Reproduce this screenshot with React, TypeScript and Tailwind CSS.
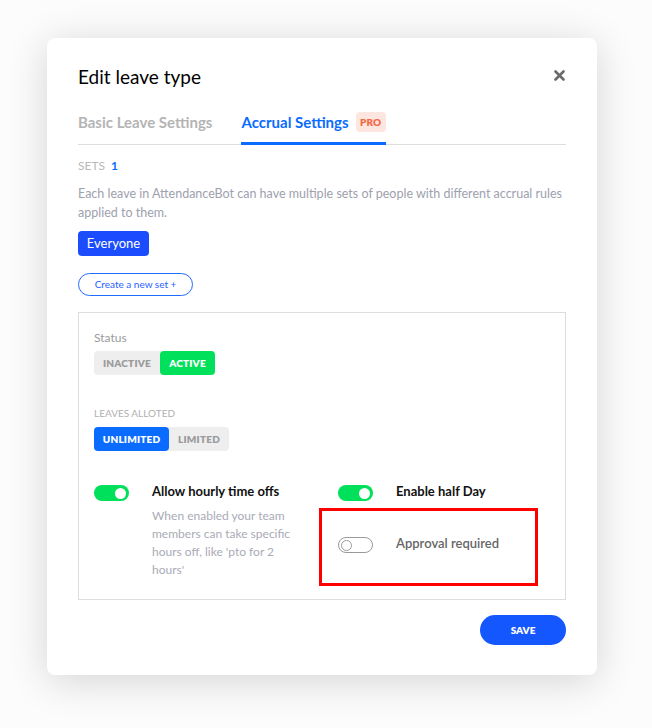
import type { ReactNode } from "react";

const FONT = { fontFamily: "Lato, 'Open Sans', sans-serif" };

function Toggle({ on }: { on: boolean }) {
  if (on) {
    return (
      <div className="flex h-4 w-[35px] shrink-0 items-center justify-end rounded-full bg-[#00e05a] pr-[3px]">
        <div className="h-[11px] w-[11px] rounded-full bg-white" />
      </div>
    );
  }
  return (
    <div className="flex h-4 w-[35px] shrink-0 items-center rounded-full border border-[#9a9a9a] bg-white pl-[2px]">
      <div className="h-[11px] w-[11px] rounded-full border border-[#9a9a9a] bg-white" />
    </div>
  );
}

function Segment({
  items,
}: {
  items: { label: string; active: boolean; color?: string; width: string }[];
}) {
  return (
    <div className="flex h-6 w-fit rounded bg-[#eeeeee]">
      {items.map((item) => (
        <div
          key={item.label}
          className={`flex h-6 items-center justify-center rounded text-[10px] font-extrabold tracking-[0.02em] ${item.width} ${
            item.active ? `${item.color} text-white` : "text-[#9b9b9b]"
          }`}
        >
          {item.label}
        </div>
      ))}
    </div>
  );
}

function OptionRow({
  on,
  title,
  titleClass,
  children,
}: {
  on: boolean;
  title: string;
  titleClass: string;
  children?: ReactNode;
}) {
  return (
    <div className="flex items-start gap-[23px]">
      <Toggle on={on} />
      <div className="-mt-[4px]">
        <div className={`text-[13px] leading-5 ${titleClass}`}>{title}</div>
        {children}
      </div>
    </div>
  );
}

export default function App() {
  return (
    <div
      className="min-h-[728px] bg-[#fcfcfc] pl-[47px] pt-[38px]"
      style={FONT}
    >
      <div className="w-[550px] rounded-lg bg-white px-[31px] pb-[30px] pt-[25px] shadow-[0_6px_40px_rgba(0,0,0,0.16)]">
        <div className="flex items-center justify-between">
          <h2 className="text-[19px] leading-7 text-black">Edit leave type</h2>
          <svg width="11" height="11" viewBox="0 0 11 11" className="mr-[1px] -mt-[4px]">
            <path d="M1.5 1.5 L9.5 9.5 M9.5 1.5 L1.5 9.5" stroke="#6b6b6b" strokeWidth="2.6" strokeLinecap="round" />
          </svg>
        </div>

        <div className="mt-[21px] flex gap-[29px] border-b border-[#dedede]">
          <div className="pb-[11px] text-[15px] font-bold leading-5 text-[#b4b4b4]">
            Basic Leave Settings
          </div>
          <div className="-mb-px flex items-center gap-[7px] border-b-[3px] border-[#0a6cff] pb-[10px]">
            <span className="text-[15px] font-bold leading-5 text-[#0a6cff]">
              Accrual Settings
            </span>
            <span className="flex h-5 w-[30px] items-center justify-center rounded bg-[#fde6df] text-[10px] font-extrabold text-[#f36a48]">
              PRO
            </span>
          </div>
        </div>

        <div className="mt-[13px] flex gap-[6px] text-[12px] leading-4">
          <span className="text-[#b8b8b8]">SETS</span>
          <span className="font-bold text-[#0a6cff]">1</span>
        </div>

        <p className="mt-[10px] text-[12.5px] leading-[19px] text-[#9da1ae]">
          Each leave in AttendanceBot can have multiple sets of people with different accrual rules applied to them.
        </p>

        <div className="mt-[9px] flex h-[25px] w-[71px] items-center justify-center rounded-sm bg-[#1b4dff] text-[13px] text-white">
          Everyone
        </div>

        <div className="mt-[17px] flex h-[23px] w-[115px] items-center justify-center rounded-full border border-[#1f6bff] text-[10px] text-[#1f5eff]">
          Create a new set +
        </div>

        <div className="mt-4 border border-[#dddddd] pb-[20px] pl-[15px] pr-[15px] pt-[17px]">
          <div className="text-[12px] leading-4 text-[#9b9b9b]">Status</div>
          <div className="mt-[5px]">
            <Segment
              items={[
                { label: "INACTIVE", active: false, width: "w-[66px]" },
                { label: "ACTIVE", active: true, color: "bg-[#00e05a]", width: "w-[55px]" },
              ]}
            />
          </div>

          <div className="mt-[31px] text-[10px] leading-[14px] text-[#b0b0b0]">
            LEAVES ALLOTED
          </div>
          <div className="mt-[7px]">
            <Segment
              items={[
                { label: "UNLIMITED", active: true, color: "bg-[#0a6cff]", width: "w-[75px]" },
                { label: "LIMITED", active: false, width: "w-[60px]" },
              ]}
            />
          </div>

          <div className="mt-[34px] flex">
            <div className="w-[244px]">
              <OptionRow on title="Allow hourly time offs" titleClass="font-bold text-[#111111]">
                <p className="mt-[6px] w-[150px] text-[12px] leading-[18px] text-[#a9abb6]">
                  When enabled your team members can take specific hours off, like 'pto for 2 hours'
                </p>
              </OptionRow>
            </div>
            <div>
              <OptionRow on title="Enable half Day" titleClass="font-bold text-[#111111]" />
              <div className="-mb-[12px] -ml-[19px] mt-[7px] h-[78px] w-[219px] border-[3px] border-[#ff0000] pl-[16px] pt-[26px]">
                <OptionRow on={false} title="Approval required" titleClass="font-semibold text-[#666666]" />
              </div>
            </div>
          </div>
        </div>

        <div className="mt-[15px] flex justify-end">
          <div className="flex h-[30px] w-[86px] items-center justify-center rounded-full bg-[#1457ff] text-[10px] font-extrabold text-white">
            SAVE
          </div>
        </div>
      </div>
    </div>
  );
}
